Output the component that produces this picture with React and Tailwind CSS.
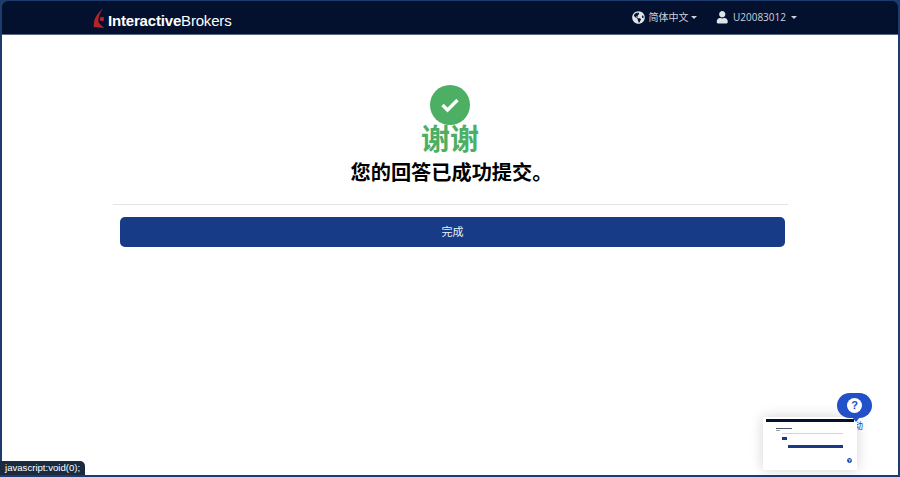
import { FaGlobeAmericas, FaUser, FaQuestionCircle } from "react-icons/fa";

const cjk = "font-['Liberation_Sans','Noto_Sans_CJK_SC',sans-serif]";

function Caret() {
  return <span className="ml-[3px] h-0 w-0 border-x-[3px] border-t-[3.5px] border-x-transparent border-t-current" />;
}

function Logo() {
  return (
    <div className="flex items-center">
      <svg width="12" height="20" viewBox="0 0 12 20" className="mr-[3px] mt-[1px]">
        <path d="M10.5 0 C6.5 3.5 2.5 8 1.2 13 L0.6 19 L11.5 20 C9 18 7 16.5 5.5 14 C5 8.5 7.5 4 10.5 0Z" fill="#b3252a" />
        <circle cx="9" cy="11" r="2.2" fill="#b3252a" />
      </svg>
      <span className="mt-[6px] text-[15px] leading-none tracking-[-0.18px] text-white font-['Liberation_Sans',sans-serif]">
        <span className="font-bold">Interactive</span>Brokers
      </span>
    </div>
  );
}

function Thumbnail() {
  return (
    <div className="absolute bottom-[7px] right-[43px] flex h-[53px] w-[94px] flex-col bg-white shadow-[0_0_12px_rgba(0,0,0,0.18)]">
      <div className="mx-[3px] mt-[2px] h-[3px] bg-[#03102e]" />
      <div className="px-[13px] pt-[6px]">
        <div className="h-[1px] w-[16px] bg-gray-600" />
        <div className="mt-[1px] h-[1px] w-[4px] bg-gray-400" />
        <div className="ml-[6px] mt-[2px] h-[1px] w-[61px] bg-gray-300" />
        <div className="ml-[6px] mt-[3px] h-[3px] w-[5px] bg-[#1a3a85]" />
        <div className="ml-[12px] mt-[5px] h-[3px] w-[55px] bg-[#1a3a85]" />
      </div>
      <FaQuestionCircle className="absolute bottom-[7px] right-[5px] text-[5px] text-[#1a4ab0]" />
    </div>
  );
}

export default function App() {
  return (
    <div className={`relative flex h-[477px] w-[900px] flex-col overflow-hidden bg-[#1c3c6e] px-[2px] pb-[2px] pt-[1px] ${cjk}`}>
      <header className="flex h-[34px] flex-none items-center justify-between rounded-t-[6px] border-b border-[#5a6b85] bg-[#03102e] pl-[91px] pr-[101px]">
        <Logo />
        <div className="flex items-center text-[10px] text-[#ccd2dc]">
          <div className="flex items-center">
            <FaGlobeAmericas className="mr-[3px] text-[13px] text-[#dfe3ea]" />
            <span>简体中文</span>
            <Caret />
          </div>
          <div className="ml-[19px] flex items-center">
            <FaUser className="mr-[4px] text-[12.5px] text-[#dfe3ea]" />
            <span className="font-['Open_Sans',sans-serif] text-[10px]">U20083012</span>
            <span className="ml-[2px] flex"><Caret /></span>
          </div>
        </div>
      </header>

      <main className="flex flex-1 flex-col items-center bg-white pt-[50px]">
        <div className="flex h-[40px] w-[40px] items-center justify-center rounded-full bg-[#4caf63]">
          <svg width="20" height="16" viewBox="0 0 20 16">
            <path d="M2.5 8 L7.5 13 L17.5 3" fill="none" stroke="white" strokeWidth="3.4" />
          </svg>
        </div>
        <h1 className="text-[29px] font-bold leading-[30px] text-[#4caf63]">谢谢</h1>
        <h2 className="ml-[3px] mt-[6px] text-[20.2px] font-bold leading-[24px] text-black">您的回答已成功提交。</h2>
        <div className="mt-[19px] h-[1px] w-[675px] bg-[#e4e4e4]" />
        <button className="ml-[5px] mt-[12px] flex h-[30px] w-[665px] items-center justify-center rounded-[5px] bg-[#183b87] text-[11px] text-[#eef1f6]">
          完成
        </button>
      </main>

      <span className="absolute bottom-[44px] right-[37px] text-[9px] text-[#2150c8]">动</span>
      <Thumbnail />
      <div className="absolute bottom-[59px] right-[28px] flex h-[25px] w-[35px] items-center justify-center rounded-full bg-[#2150c8]">
        <span className="flex h-[15px] w-[15px] items-center justify-center rounded-full bg-white text-[11px] font-bold leading-none text-[#2150c8]">?</span>
        <span className="absolute -bottom-[4px] left-[15px] h-0 w-0 border-x-[4px] border-t-[5px] border-x-transparent border-t-[#2150c8]" />
      </div>

      <div className="absolute bottom-[2px] left-0 flex h-[14px] items-center rounded-tr-[5px] bg-[#1b2a3f] px-[5px] text-[9.6px] text-white">
        javascript:void(0);
      </div>
    </div>
  );
}
